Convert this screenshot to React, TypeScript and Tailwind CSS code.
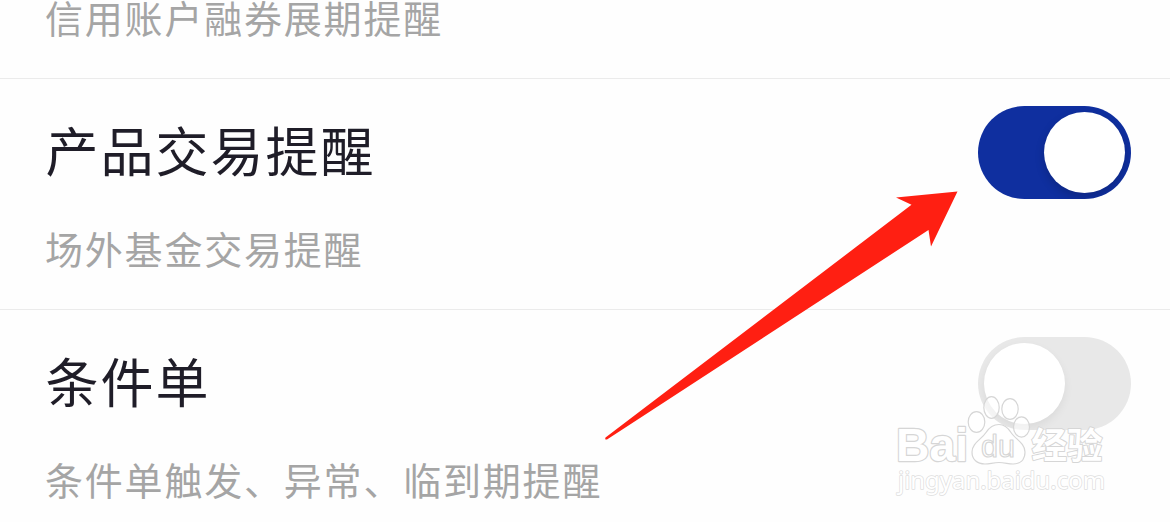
import clsx from "clsx";

const ITEMS = [
  { title: "产品交易提醒", desc: "场外基金交易提醒", on: true },
  { title: "条件单", desc: "条件单触发、异常、临到期提醒", on: false },
];

function Toggle({ on }: { on: boolean }) {
  return (
    <button
      type="button"
      role="switch"
      aria-checked={on}
      className={clsx(
        "mt-[27px] flex h-[93px] w-[153px] shrink-0 items-center overflow-hidden rounded-full px-1.5",
        on ? "justify-end bg-[#0f2f9f]" : "justify-start bg-[#e8e8e8]"
      )}
    >
      <span
        className={clsx(
          "size-[81px] rounded-full bg-white",
          on ? "shadow-[0_4px_10px_rgba(0,0,0,0.18)]" : "shadow-[0_4px_10px_rgba(0,0,0,0.06)]"
        )}
      />
    </button>
  );
}

function Arrow() {
  return (
    <svg
      className="pointer-events-none absolute left-[600px] top-[186px]"
      width="364"
      height="258"
      viewBox="600 186 364 258"
      fill="#ff1f12"
    >
      <path d="M957.5 191.5 L931 246.5 L928.5 230 L607 439.5 Q604.5 440 605.5 437.5 L911.5 204.8 L896 197.6 Z" />
    </svg>
  );
}

function Watermark() {
  return (
    <svg
      className="pointer-events-none absolute left-[890px] top-[390px]"
      width="225"
      height="110"
      viewBox="890 390 225 110"
    >
      <g fill="#fff" fillOpacity="0.6" stroke="#d6d6d6" strokeWidth="1.2" strokeLinejoin="round">
        <ellipse cx="976.5" cy="422" rx="8.3" ry="10.3" />
        <ellipse cx="991.5" cy="407.5" rx="7.7" ry="10.8" />
        <ellipse cx="1010" cy="409" rx="8.2" ry="10.3" />
        <ellipse cx="1021.5" cy="427" rx="8" ry="10.2" />
        <path d="M999 424.5c5 0 8.500 2.500 12 8 4 6.500 14 10.500 14 19.500 0 8-5 12-12 12-5 0-8-1.500-14-1.500s-9 1.500-14 1.500c-8 0-13-4.500-13-12 0-9 9.500-12.500 14-19.500 3.500-5.500 7-8 13-8z" />
        <text
          x="981"
          y="457"
          textLength="34"
          lengthAdjust="spacingAndGlyphs"
          className="font-['Liberation_Sans',sans-serif] text-[31px]"
        >
          du
        </text>
      </g>
      {/* white lettering with the grey contour kept outside the glyphs */}
      <g fill="#fff" stroke="#d6d6d6" strokeLinejoin="round" className="[paint-order:stroke]">
        <text
          x="896"
          y="461"
          strokeWidth="2.4"
          textLength="72"
          lengthAdjust="spacingAndGlyphs"
          className="font-['Liberation_Sans',sans-serif] text-[47px] font-bold"
        >
          Bai
        </text>
        <text
          x="1031.5"
          y="459"
          strokeWidth="2"
          textLength="71"
          lengthAdjust="spacingAndGlyphs"
          className="font-['Noto_Sans_CJK_SC',sans-serif] text-[36px] font-bold"
        >
          经验
        </text>
        <text
          x="898"
          y="489"
          strokeWidth="1.5"
          stroke="#dedede"
          textLength="207"
          lengthAdjust="spacingAndGlyphs"
          className="font-['Noto_Sans',sans-serif] text-[24px]"
        >
          jingyan.baidu.com
        </text>
      </g>
    </svg>
  );
}

export default function App() {
  return (
    <main className="relative h-[522px] w-full overflow-hidden bg-[#fefefe] font-['Noto_Sans_CJK_SC',sans-serif]">
      <section className="flex h-[79px] items-start border-b border-[#ebebeb] px-[45px]">
        <p className="-mt-[11px] whitespace-nowrap text-[38px] leading-[56px] tracking-[1.8px] text-[#a5a5a5]">
          信用账户融券展期提醒
        </p>
      </section>

      {ITEMS.map((item) => (
        <section
          key={item.title}
          className="flex h-[231px] items-start justify-between border-b border-[#ebebeb] pl-[45px] pr-[39px]"
        >
          <div className="whitespace-nowrap">
            <h2 className="mt-[30px] pl-[0.5px] text-[53px] leading-[80px] tracking-[2px] text-[#1f1d28]">
              {item.title}
            </h2>
            <p className="mt-[31px] text-[38px] leading-[56px] tracking-[1.8px] text-[#a5a5a5]">
              {item.desc}
            </p>
          </div>
          <Toggle on={item.on} />
        </section>
      ))}

      <Arrow />
      <Watermark />
    </main>
  );
}
